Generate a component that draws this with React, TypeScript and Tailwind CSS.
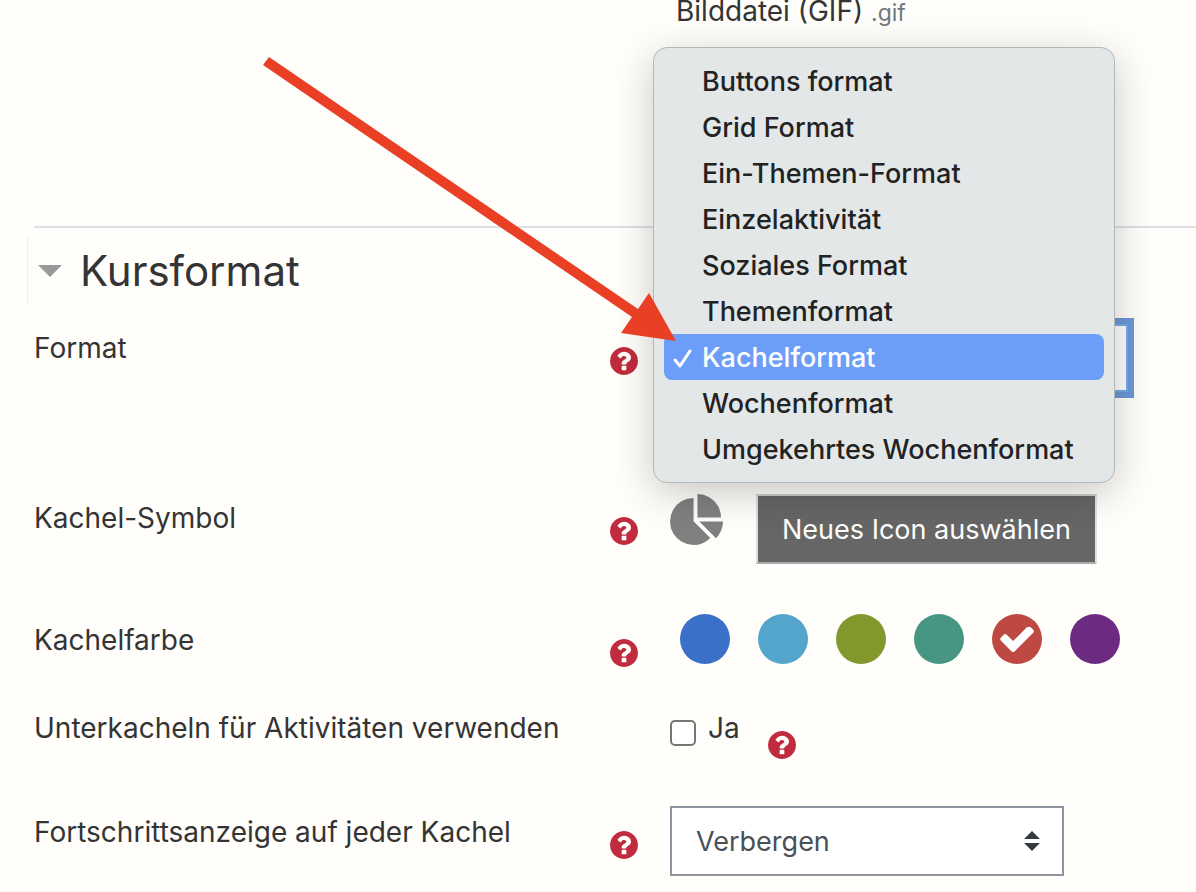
import React, { useState } from "react";

const formats = [
    "Buttons format",
    "Grid Format",
    "Ein-Themen-Format",
    "Einzelaktivität",
    "Soziales Format",
    "Themenformat",
    "Kachelformat",
    "Wochenformat",
    "Umgekehrtes Wochenformat",
];

const colours = [
    { name: "Blau", bg: "bg-[#3a70c8]" },
    { name: "Hellblau", bg: "bg-[#53a5cb]" },
    { name: "Grün", bg: "bg-[#82982d]" },
    { name: "Türkis", bg: "bg-[#479684]" },
    { name: "Rot", bg: "bg-[#be4842]" },
    { name: "Violett", bg: "bg-[#6c2b81]" },
];

function Help({ topic }: { topic: string }) {
    return (
        <button
            type="button"
            aria-label={`Hilfe zu ${topic}`}
            className="mt-[23px] size-7 shrink-0 text-[#c02b3d]"
        >
            <svg viewBox="128 128 1536 1536" fill="currentColor" className="size-7">
                <path d="M1024 1376v-192q0-14-9-23t-23-9h-192q-14 0-23 9t-9 23v192q0 14 9 23t23 9h192q14 0 23-9t9-23zm256-672q0-88-55.5-163t-138.5-116-170-41q-243 0-371 213-15 24 8 42l132 100q7 6 19 6 16 0 25-12 53-68 86-92 34-24 86-24 48 0 85.5 26t37.5 59q0 38-20 61t-68 45q-63 28-115.5 86.5t-52.5 125.5v36q0 14 9 23t23 9h192q14 0 23-9t9-23q0-19 21.5-49.5t54.5-49.5q32-18 49-28.5t46-35 44.5-48 28-60.5 12.5-81zm384 192q0 209-103 385.5t-279.5 279.5-385.5 103-385.5-103-279.5-279.5-103-385.5 103-385.5 279.5-279.5 385.5-103 385.5 103 279.5 279.5 103 385.5z" />
            </svg>
        </button>
    );
}

type RowProps = {
    label: string;
    htmlFor?: string;
    help?: boolean;
    className: string;
    children: React.ReactNode;
};

function Row({ label, htmlFor, help = true, className, children }: RowProps) {
    return (
        <div className={`grid grid-cols-[636fr_526fr] items-start ${className}`}>
            <div className="flex items-start justify-between pr-8">
                <label htmlFor={htmlFor} className="leading-[48px] whitespace-nowrap">
                    {label}
                </label>
                {help && <Help topic={label} />}
            </div>
            {children}
        </div>
    );
}

export default function App() {
    const [format, setFormat] = useState("Kachelformat");
    const [colour, setColour] = useState("Rot");

    return (
        <main className="relative min-h-screen overflow-hidden bg-[#fffefa] pl-[34px] font-['Inter','Liberation_Sans',sans-serif] text-[28px] text-[#343434]">
            <div className="grid h-[226px] grid-cols-[636fr_526fr] items-start">
                <p className="col-start-2 pl-[6px] leading-[22px] whitespace-nowrap">
                    Bilddatei (GIF){" "}
                    <small className="text-[23px] text-[#6f7780]">.gif</small>
                </p>
            </div>

            <section className="border-t-2 border-[#dde1e7] pt-[9px]">
                <h2 className="-ml-[7px] mb-5 border-l border-[#ededf0] text-[42px] leading-[67px]">
                    <button type="button" aria-expanded="true" className="flex items-center gap-[18px] pl-[10px]">
                        <svg viewBox="0 0 24 12" fill="#999" className="h-3 w-6">
                            <path d="M0 0h24L12 12z" />
                        </svg>
                        Kursformat
                    </button>
                </h2>

                <Row label="Format" htmlFor="format" className="h-[170px]">
                    <div className="relative pr-[68px]">
                        <select
                            id="format"
                            value={format}
                            onChange={(e) => setFormat(e.target.value)}
                            className="block h-[68px] w-full appearance-none border-2 border-[#76abec] bg-white px-6 text-[27px] text-[#495057] ring-6 ring-[#6b98d4] outline-none"
                        >
                            {formats.map((name) => (
                                <option key={name}>{name}</option>
                            ))}
                        </select>
                        <ul
                            role="listbox"
                            aria-label="Format"
                            className="absolute bottom-[-91px] -left-[17px] z-10 w-[462px] rounded-[14px] border border-[#b4b7b6] bg-[#e3e7e8] p-[10px] text-[27px] font-medium text-[#222] shadow-[0_10px_40px_rgba(0,0,0,0.22)]"
                        >
                            {formats.map((name) => (
                                <li key={name} role="option" aria-selected={name === format}>
                                    <button
                                        type="button"
                                        onClick={() => setFormat(name)}
                                        className={`flex h-[46px] w-full items-center rounded-lg pt-0.5 pl-2 text-left whitespace-nowrap ${
                                            name === format ? "bg-[#6c9ef9] text-white" : ""
                                        }`}
                                    >
                                        <span className="w-[30px] shrink-0">
                                            {name === format && (
                                                <svg
                                                    viewBox="0 0 22 22"
                                                    fill="none"
                                                    stroke="currentColor"
                                                    strokeWidth="3"
                                                    strokeLinecap="round"
                                                    strokeLinejoin="round"
                                                    className="size-[22px]"
                                                >
                                                    <path d="M3 13l5 6L18 4" />
                                                </svg>
                                            )}
                                        </span>
                                        {name}
                                    </button>
                                </li>
                            ))}
                        </ul>
                    </div>
                </Row>

                <Row label="Kachel-Symbol" htmlFor="icon" className="h-[122px]">
                    <div className="flex items-start gap-[33px]">
                        <svg viewBox="0 0 1728 1664" fill="#808080" className="h-[51px] w-[53px] shrink-0">
                            <path d="M768 890l546 546q-106 108-247.5 168t-298.5 60q-209 0-385.5-103t-279.5-279.5-103-385.5 103-385.5 279.5-279.5 385.5-103v762zm187 6h773q0 157-60 298.5t-168 247.5zm709-128h-768v-768q209 0 385.5 103t279.5 279.5 103 385.5z" />
                        </svg>
                        <button
                            id="icon"
                            type="button"
                            className="h-[70px] border-2 border-t-[#cfcfcf] border-r-[#e3e3e3] border-b-[#adadad] border-l-[#dedede] bg-[#666] px-6 pt-0.5 text-[27px] whitespace-nowrap text-[#fffefa]"
                        >
                            Neues Icon auswählen
                        </button>
                    </div>
                </Row>

                <Row label="Kachelfarbe" className="h-[88px]">
                    <div role="radiogroup" aria-label="Kachelfarbe" className="flex h-[46px] items-center gap-7 pl-[10px]">
                        {colours.map(({ name, bg }) => (
                            <label key={name} className={`grid size-[50px] shrink-0 place-items-center rounded-full ${bg}`}>
                                <input
                                    type="radio"
                                    name="colour"
                                    aria-label={name}
                                    checked={colour === name}
                                    onChange={() => setColour(name)}
                                    className="col-start-1 row-start-1 size-[50px] appearance-none rounded-full"
                                />
                                {colour === name && (
                                    <svg
                                        viewBox="121 370 1550 1152"
                                        fill="white"
                                        className="pointer-events-none col-start-1 row-start-1 h-[25px] w-[34px]"
                                    >
                                        <path d="M1671 566q0 40-28 68l-724 724-136 136q-28 28-68 28t-68-28l-136-136-362-362q-28-28-28-68t28-68l136-136q28-28 68-28t68 28l294 295 656-657q28-28 68-28t68 28l136 136q28 28 28 68z" />
                                    </svg>
                                )}
                            </label>
                        ))}
                    </div>
                </Row>

                <Row label="Unterkacheln für Aktivitäten verwenden" htmlFor="subtiles" help={false} className="h-[104px]">
                    <div className="flex items-start">
                        <input
                            id="subtiles"
                            type="checkbox"
                            className="mt-4 mr-3 size-[26px] shrink-0 appearance-none rounded-[5px] border-2 border-[#767676] bg-white checked:bg-[#6c9ef9]"
                        />
                        <label htmlFor="subtiles" className="mr-7 leading-[48px]">
                            Ja
                        </label>
                        <div className="pt-1">
                            <Help topic="Unterkacheln" />
                        </div>
                    </div>
                </Row>

                <Row label="Fortschrittsanzeige auf jeder Kachel" htmlFor="progress" className="h-[84px]">
                    <div className="flex h-[66px] items-center">
                        <div className="grid w-[394px] items-center">
                            <select
                                id="progress"
                                className="col-start-1 row-start-1 h-[70px] w-full appearance-none border-2 border-[#8f959e] bg-white px-6 pt-0.5 text-[27px] text-[#495057]"
                            >
                                <option>Verbergen</option>
                                <option>Anzeigen</option>
                            </select>
                            <svg
                                viewBox="0 0 16 20"
                                fill="#343a40"
                                className="pointer-events-none col-start-1 row-start-1 mr-6 h-5 w-4 justify-self-end"
                            >
                                <path d="M0 8h16L8 0zM0 12h16l-8 8z" />
                            </svg>
                        </div>
                    </div>
                </Row>
            </section>

            {/* arrow pointing at the selected format */}
            <svg
                viewBox="0 0 414 286"
                fill="#e94025"
                aria-hidden="true"
                className="pointer-events-none absolute top-[56px] left-[262px] z-20 h-[286px] w-[414px]"
            >
                <path d="M7 1L376 253L387 237L414 285L359 277L370 261L1 9z" />
            </svg>
        </main>
    );
}
